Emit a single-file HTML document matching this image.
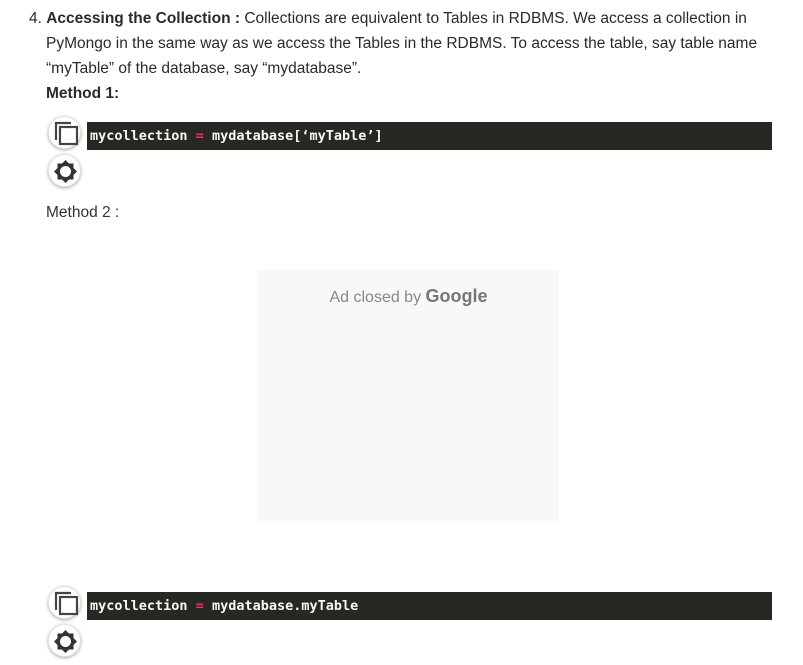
<!DOCTYPE html>
<html><head><meta charset="utf-8"><style>
body{margin:0;background:#fff;width:803px;height:665px;overflow:hidden;font-family:"Liberation Sans",Arial,sans-serif;color:#2a2a2a;position:relative}
.t{position:absolute;font-size:15.5px;line-height:25px;white-space:nowrap}
.code{position:absolute;left:87px;width:685px;height:28px;background:#272822;color:#f8f8f2;font-family:"DejaVu Sans Mono","Liberation Mono",monospace;font-size:13.5px;font-weight:bold;line-height:29px;padding-left:3px;box-sizing:border-box}
.eq{color:#f92672}
.btn{position:absolute;width:33px;height:33px;border-radius:50%;background:#fff;box-shadow:0 1px 3px rgba(0,0,0,.35);border:1px solid #e4e4e4;box-sizing:border-box}
.btn svg{position:absolute;left:0;top:0}
.ad{position:absolute;left:258px;top:270px;width:301px;height:251px;background:#f8f8f8;text-align:center}
</style></head><body>
<div class="t" style="left:29px;top:6px">4. <b>Accessing the Collection :</b> Collections are equivalent to Tables in RDBMS. We access a collection in</div>
<div class="t" style="left:46px;top:31px">PyMongo in the same way as we access the Tables in the RDBMS. To access the table, say table name</div>
<div class="t" style="left:46px;top:56px">“myTable” of the database, say “mydatabase”.</div>
<div class="t" style="left:46px;top:81px"><b>Method 1:</b></div>

<div class="code" style="top:122px">mycollection <span class="eq">=</span> mydatabase[‘myTable’]</div>
<div class="btn" style="left:48px;top:116px"><svg width="33" height="33"><path d="M7 23V6h15" fill="none" stroke="#444" stroke-width="2.2"/><rect x="11" y="10" width="17" height="17" fill="none" stroke="#444" stroke-width="2.2"/></svg></div>
<div class="btn" style="left:48px;top:154px"><svg width="33" height="33"><polygon points="16.5,5 20,8.5 24.5,8.5 24.5,13 28,16.5 24.5,20 24.5,24.5 20,24.5 16.5,28 13,24.5 8.5,24.5 8.5,20 5,16.5 8.5,13 8.5,8.5 13,8.5" fill="#333"/><circle cx="16.5" cy="16.5" r="5.5" fill="#fff"/></svg></div>

<div class="t" style="left:46px;top:200px;color:#333">Method 2 :</div>

<div class="ad"><div style="margin-top:16px;font-size:16px;color:#888">Ad closed by <span style="font-size:18px;font-weight:bold;color:#777">Google</span></div></div>

<div class="code" style="top:592px">mycollection <span class="eq">=</span> mydatabase.myTable</div>
<div class="btn" style="left:48px;top:586px"><svg width="33" height="33"><path d="M7 23V6h15" fill="none" stroke="#444" stroke-width="2.2"/><rect x="11" y="10" width="17" height="17" fill="none" stroke="#444" stroke-width="2.2"/></svg></div>
<div class="btn" style="left:48px;top:624px"><svg width="33" height="33"><polygon points="16.5,5 20,8.5 24.5,8.5 24.5,13 28,16.5 24.5,20 24.5,24.5 20,24.5 16.5,28 13,24.5 8.5,24.5 8.5,20 5,16.5 8.5,13 8.5,8.5 13,8.5" fill="#333"/><circle cx="16.5" cy="16.5" r="5.5" fill="#fff"/></svg></div>
</body></html>
